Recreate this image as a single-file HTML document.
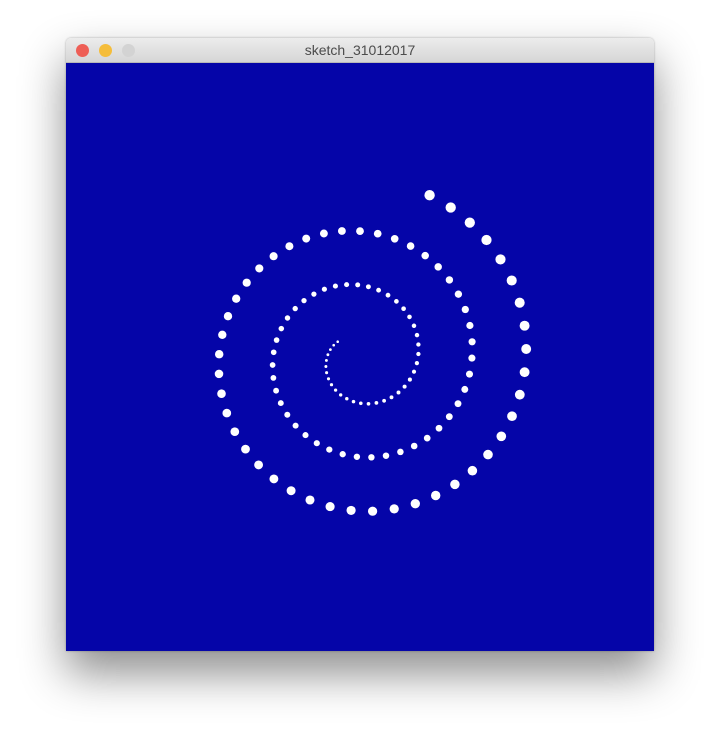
<!DOCTYPE html>
<html><head><meta charset="utf-8">
<style>
html,body{margin:0;padding:0;background:#fff;width:720px;height:745px;overflow:hidden;}
.win{position:absolute;left:66px;top:38px;width:588px;height:613px;box-shadow:0 22px 45px rgba(0,0,0,0.45),0 0 2px rgba(0,0,0,0.3);border-radius:5px 5px 0 0;}
.bar{position:absolute;left:0;top:0;width:588px;height:25px;background:linear-gradient(#ececec,#d6d6d6);border-radius:5px 5px 0 0;border-bottom:1px solid #b8b8b8;box-sizing:border-box;}
.bar .t{position:absolute;left:0;right:0;top:4px;text-align:center;font:14px "Liberation Sans",sans-serif;color:#4c4c4c;}
.dot{position:absolute;top:6px;width:13px;height:13px;border-radius:50%;}
.cv{position:absolute;left:0;top:25px;width:588px;height:588px;background:#0505a8;}
svg{position:absolute;left:0;top:0;}
</style></head><body>
<div class="win">
<div class="bar">
<div class="dot" style="left:10px;background:#ee5e56;"></div>
<div class="dot" style="left:33px;background:#f5bd3a;"></div>
<div class="dot" style="left:56px;background:#d3d3d3;"></div>
<div class="t">sketch_31012017</div>
</div>
<div class="cv"></div>
</div>
<svg id="s" width="720" height="745"></svg>
<script>
var s=document.getElementById('s'),cx=359,cy=357.5,k=8.594,h='';
var t=-0.64;
while(t<16.95){
 var r=32+k*t,a=Math.PI-t;
 var x=cx+r*Math.cos(a),y=cy+r*Math.sin(a);
 var d=1.2+0.052*r;
 h+='<circle cx="'+x.toFixed(1)+'" cy="'+y.toFixed(1)+'" r="'+(d/2).toFixed(2)+'" fill="#fff"/>';
 t+=0.13+1.5/r;
}
s.innerHTML=h;
</script>
</body></html>
